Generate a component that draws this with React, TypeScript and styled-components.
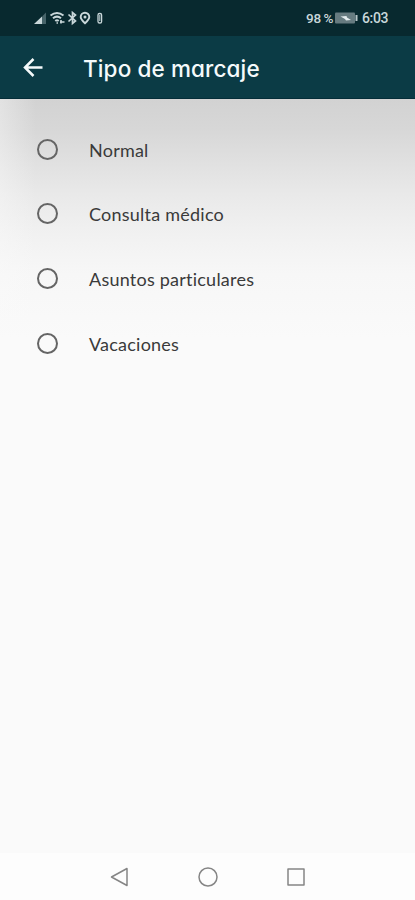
import React from "react";
import styled, { createGlobalStyle } from "styled-components";

const GlobalStyle = createGlobalStyle`
  * {
    box-sizing: border-box;
  }

  body {
    margin: 0;
    font-family: Lato, sans-serif;
  }
`;

const Screen = styled.div`
  display: flex;
  flex-direction: column;
  width: 100%;
  height: 100vh;
  overflow: hidden;
  background: #fafafa;
`;

const StatusBar = styled.div`
  display: flex;
  justify-content: space-between;
  align-items: center;
  flex: none;
  height: 36px;
  padding: 0 27px 0 33px;
  background: #08292f;
  color: #c9d7da;
`;

const StatusInfo = styled.div`
  display: flex;
  align-items: center;
  font: 500 13.5px/16px Roboto, sans-serif;
`;

const Percentage = styled.span`
  letter-spacing: -0.3px;
  word-spacing: -0.5px;
`;

const Clock = styled.span`
  font-size: 14px;
  letter-spacing: -0.4px;
`;

const BatteryIcon = styled.svg`
  margin: 0 4px 0 2px;
`;

const AppBar = styled.header`
  display: flex;
  align-items: center;
  flex: none;
  height: 63px;
  padding-left: 20px;
  border-bottom: 1px solid #042d38;
  background: #0b3b45;
  color: #f5fafb;
`;

const BackButton = styled.button`
  display: flex;
  width: 26px;
  height: 26px;
  margin-right: 37px;
  padding: 0;
  border: 0;
  background: none;
  color: inherit;
`;

const Title = styled.h1`
  margin: 4px 0 0;
  font: 500 22.5px/30px Inter, sans-serif;
  font-feature-settings: "cv11" 1;
  letter-spacing: 0.12px;
  white-space: nowrap;
`;

const Content = styled.main`
  flex: 1;
  padding-top: 18px;
  background:
    linear-gradient(to right, rgba(250, 250, 250, 0.4), rgba(250, 250, 250, 0) 36px),
    linear-gradient(
      to bottom,
      #d2d2d2 0,
      #d7d7d7 30px,
      #e0e0e0 62px,
      #e9e9e9 95px,
      #f1f1f1 135px,
      #f7f7f7 175px,
      #fafafa 240px
    );
`;

const Option = styled.label`
  display: flex;
  align-items: center;
  height: 64.6px;
  padding-left: 37px;
`;

const Radio = styled.input`
  appearance: none;
  flex: none;
  width: 21px;
  height: 21px;
  margin: 0 31px 0 0;
  border: 2px solid #656565;
  border-radius: 50%;
`;

const OptionText = styled.span`
  margin-top: 1px;
  color: #3a3a3a;
  font-size: 18px;
  line-height: 24px;
  letter-spacing: 0.23px;
  font-variant-ligatures: none;
`;

const NavigationBar = styled.nav`
  display: flex;
  justify-content: center;
  align-items: center;
  gap: 64px;
  flex: none;
  height: 47px;
  background: #fdfdfd;
`;

const NavIcon = styled.svg`
  width: 24px;
  height: 24px;
  fill: none;
  stroke: #858585;
  stroke-width: 1.5;
  stroke-linejoin: round;
`;

const options = ["Normal", "Consulta médico", "Asuntos particulares", "Vacaciones"];

function StatusIcons() {
  return (
    <svg width="74" height="20" viewBox="33 8 74 20" fill="none" stroke="currentColor">
      <path d="M34 24L42 16.500V24Z" fill="currentColor" stroke="none" />
      <path d="M42 16.500L46 12.500V24H42Z" fill="#47646a" stroke="none" />
      <path
        d="M50.500 15.500q6.500-5 13 0M53 18.300q4-3.300 8 0M55.300 21q1.700-1.500 3.400 0"
        strokeWidth="2"
      />
      <path d="M56.500 23h1.500M61 20v3.500M60 22h4.500" strokeWidth="1.600" />
      <path d="M68.500 14.500l7 6.500-3 2.500v-11l3 2.500-7 6.500" strokeWidth="1.700" />
      <path
        d="M85 23.300c-2.700-2.500-4.300-4.100-4.300-6.300a4.300 4.300 0 0 1 8.600 0c0 2.200-1.600 3.800-4.300 6.300Z"
        strokeWidth="1.900"
      />
      <circle cx="85" cy="17" r="1.500" fill="currentColor" stroke="none" />
      <rect x="98" y="13.500" width="3.600" height="9.500" rx="1.600" strokeWidth="1.300" />
      <path d="M99.800 15v6" strokeWidth="1" />
    </svg>
  );
}

export default function App() {
  return (
    <Screen>
      <GlobalStyle />
      <StatusBar>
        <StatusIcons />
        <StatusInfo>
          <Percentage>98 %</Percentage>
          <BatteryIcon width="23" height="12" viewBox="0 0 23 12">
            <rect x="0" y="0.5" width="20" height="11" rx="1" fill="#667b80" />
            <path d="M20.500 3h2v6h-2z" fill="#b7c5c8" />
            <path d="M5.500 4.500l6-.5.500 1.500 4 2.500-5 .5-1-1.500z" fill="#e3ecee" />
          </BatteryIcon>
          <Clock>6:03</Clock>
        </StatusInfo>
      </StatusBar>

      <AppBar>
        <BackButton aria-label="Volver">
          <svg
            width="26"
            height="26"
            viewBox="0 0 26 26"
            fill="none"
            stroke="currentColor"
            strokeWidth="2.500"
          >
            <path d="M22.500 13.500H5M13.500 5L5 13.500L13.500 22" />
          </svg>
        </BackButton>
        <Title>Tipo de marcaje</Title>
      </AppBar>

      <Content>
        {options.map((label) => (
          <Option key={label}>
            <Radio type="radio" name="tipo" />
            <OptionText>{label}</OptionText>
          </Option>
        ))}
      </Content>

      <NavigationBar>
        <NavIcon viewBox="0 0 24 24">
          <path d="M19 3.500v17L3.500 12Z" />
        </NavIcon>
        <NavIcon viewBox="0 0 24 24">
          <circle cx="12" cy="12" r="9" />
        </NavIcon>
        <NavIcon viewBox="0 0 24 24">
          <rect x="4" y="4" width="16" height="16" />
        </NavIcon>
      </NavigationBar>
    </Screen>
  );
}
